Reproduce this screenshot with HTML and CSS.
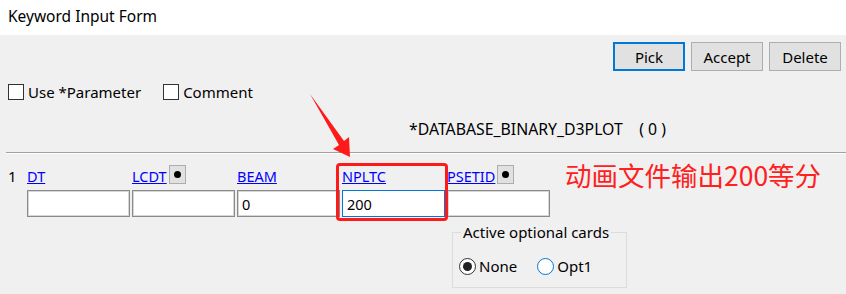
FILE: index.html
```html
<!DOCTYPE html>
<html lang="en">
<head>
  <meta charset="UTF-8" />
  <title>Keyword Input Form</title>
  <link rel="stylesheet" href="styles.css">
</head>
<body>
  <div class="titlebar">Keyword Input Form</div>

  <div class="form">
    <div class="toolbar">
      <button class="btn btn-default">Pick</button>
      <button class="btn">Accept</button>
      <button class="btn">Delete</button>
    </div>

    <div class="options">
      <label class="check"><span class="box"></span>Use *Parameter</label>
      <label class="check"><span class="box"></span>Comment</label>
    </div>

    <div class="keyword">*DATABASE_BINARY_D3PLOT &nbsp;&nbsp; ( 0 )</div>

    <div class="separator"></div>

    <div class="card">
      <div class="card-no">1</div>
      <div class="field">
        <div class="field-head"><a href="#">DT</a></div>
        <div class="input"></div>
      </div>
      <div class="field">
        <div class="field-head"><a href="#">LCDT</a><span class="dot-btn"><i></i></span></div>
        <div class="input"></div>
      </div>
      <div class="field">
        <div class="field-head"><a href="#">BEAM</a></div>
        <div class="input">0</div>
      </div>
      <div class="field">
        <div class="field-head"><a href="#">NPLTC</a></div>
        <div class="input input-focus">200</div>
      </div>
      <div class="field">
        <div class="field-head"><a href="#">PSETID</a><span class="dot-btn"><i></i></span></div>
        <div class="input"></div>
      </div>
    </div>

    <fieldset class="group">
      <legend>Active optional cards</legend>
      <div class="radios">
        <label class="radio"><span class="circle checked"></span>None</label>
        <label class="radio"><span class="circle hover"></span>Opt1</label>
      </div>
    </fieldset>
  </div>

  <!-- annotations drawn over the form -->
  <div class="mark-box"></div>
  <div class="mark-text">动画文件输出200等分</div>
  <svg class="arrow" width="846" height="294" viewBox="0 0 846 294">
    <polygon points="310,94 344,141 349,137 350,157 333,149 339,145" fill="#ff1a1a" />
  </svg>
</body>
</html>
```

FILE: styles.css
```css
html, body {
  margin: 0;
  padding: 0;
  width: 100%;
  height: 100%;
  overflow: hidden;
  font-family: 'Noto Sans', 'Open Sans', sans-serif;
  font-size: 15px;
  color: #000;
}
body {
  background: #f0f0f0;
  position: relative;
}
.titlebar {
  height: 35px;
  line-height: 33px;
  padding-left: 8px;
  background: #fff;
  font-size: 15.5px;
}
.toolbar {
  display: flex;
  justify-content: flex-end;
  gap: 6px;
  padding: 7px 5px 0 0;
}
.btn {
  width: 72px;
  height: 29px;
  background: #e1e1e1;
  border: 1px solid #adadad;
  font: inherit;
  font-size: 15px;
  padding: 0;
}
.btn-default {
  border: 2px solid #0078d7;
}
.options {
  display: flex;
  gap: 22px;
  padding: 12px 0 0 8px;
  height: 18px;
}
.check {
  display: flex;
  align-items: center;
  gap: 4px;
}
.box {
  width: 14px;
  height: 14px;
  border: 1px solid #333;
  background: #fff;
}
.keyword {
  padding: 17px 0 0 409px;
  height: 24px;
  font-size: 15.8px;
}
.separator {
  margin: 10px 0 0 6px;
  border-top: 1px solid #a0a0a0;
  border-bottom: 1px solid #fff;
}
.card {
  display: flex;
  padding: 11px 0 0 8px;
}
.card-no {
  width: 19px;
  padding-top: 1px;
}
.field {
  width: 105px;
}
.field-head {
  height: 25px;
  display: flex;
  align-items: flex-start;
  gap: 2px;
}
.field-head a {
  color: #0000ff;
  text-decoration: underline;
  font-size: 14.5px;
  line-height: 22px;
}
.dot-btn {
  width: 15px;
  height: 17px;
  background: #e1e1e1;
  border: 1px solid #adadad;
  display: flex;
  align-items: center;
  justify-content: center;
}
.dot-btn i {
  width: 7px;
  height: 7px;
  border-radius: 50%;
  background: #000;
}
.input {
  width: 97px;
  height: 25px;
  background: #fff;
  border: 1px solid #8a8a8a;
  box-shadow: inset 0 0 0 1px #d6d6d6;
  padding-left: 4px;
  box-sizing: content-box;
  font-size: 14.5px;
  line-height: 27px;
}
.input-focus {
  border-color: #0078d7;
  box-shadow: none;
}
.group {
  margin: 5px 0 0 452px;
  width: 175px;
  height: 66px;
  padding: 0;
  border: 1px solid #dcdcdc;
  box-sizing: border-box;
}
.group legend {
  margin-left: 8px;
  padding: 0 2px;
}
.radios {
  display: flex;
  gap: 20px;
  padding: 14px 0 0 6px;
}
.radio {
  display: flex;
  align-items: center;
  gap: 3px;
}
.circle {
  width: 15px;
  height: 15px;
  border: 1px solid #333;
  border-radius: 50%;
  background: #fff;
  position: relative;
}
.circle.checked::after {
  content: '';
  position: absolute;
  left: 3px;
  top: 3px;
  width: 9px;
  height: 9px;
  border-radius: 50%;
  background: #222;
}
.circle.hover {
  border-color: #0078d7;
}
.mark-box {
  position: absolute;
  left: 336px;
  top: 163px;
  width: 106px;
  height: 52px;
  border: 3px solid #ff1a1a;
  border-radius: 4px;
}
.mark-text {
  position: absolute;
  left: 565px;
  top: 155px;
  font-family: 'Noto Sans CJK SC', sans-serif;
  font-size: 26.5px;
  color: #ff2020;
  white-space: nowrap;
}
.arrow {
  position: absolute;
  left: 0;
  top: 0;
  pointer-events: none;
}
```
